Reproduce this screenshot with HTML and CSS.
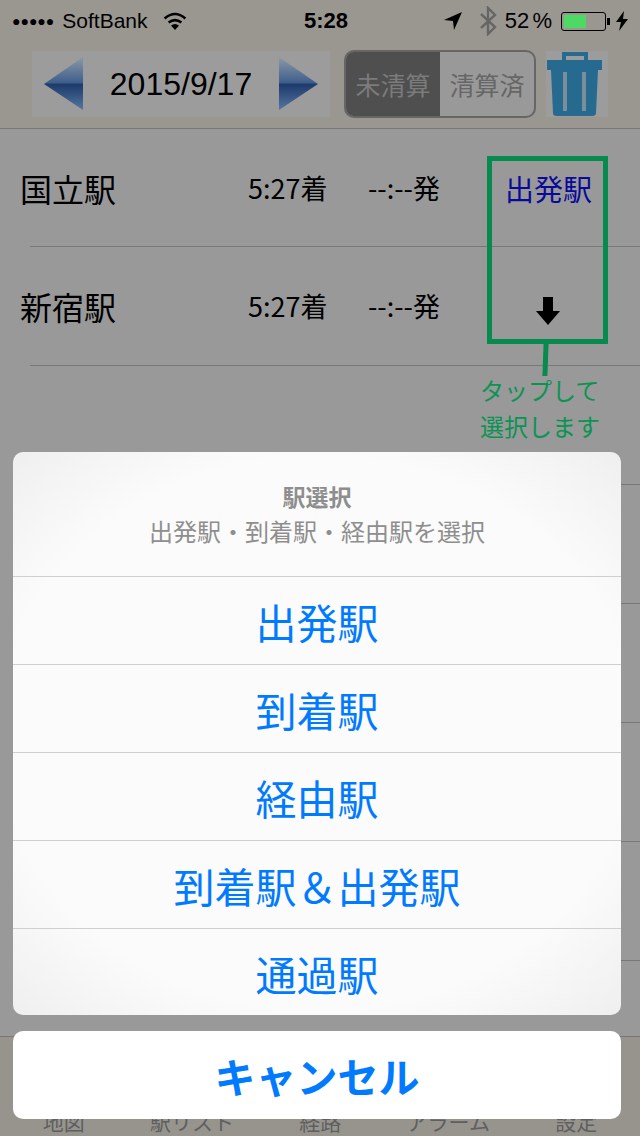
FILE: index.html
```html
<!DOCTYPE html>
<html lang="ja">
<head>
    <meta charset="UTF-8">
    <meta name="viewport" content="width=device-width, initial-scale=1.0">
    <title>駅選択</title>
    <link rel="stylesheet" href="styles.css">
</head>
<body>
    <div class="phone">
        <header class="top">
            <div class="status">
                <div class="status-left">
                    <span class="dots">●●●●●</span>
                    <span>SoftBank</span>
                    <svg class="wifi" width="26" height="20" viewBox="0 0 26 20">
                        <path d="M13 19 L9 14.5 Q13 11.5 17 14.5 Z" fill="#000"/>
                        <path d="M6.6 11.6 Q13 6.6 19.4 11.6" fill="none" stroke="#000" stroke-width="2.6"/>
                        <path d="M2.6 7.4 Q13 -1.4 23.4 7.4" fill="none" stroke="#000" stroke-width="2.6"/>
                    </svg>
                </div>
                <div class="status-time">5:28</div>
                <div class="status-right">
                    <svg width="18" height="18" viewBox="0 0 18 18"><path d="M18 0 L0 8 L9 9 L10 18 Z" fill="#000"/></svg>
                    <svg class="bt" width="18" height="30" viewBox="0 0 18 30"><path d="M2 8 L16 21 L9 28 L9 2 L16 9 L2 22" fill="none" stroke="#666" stroke-width="2.4"/></svg>
                    <span class="percent">52 %</span>
                    <div class="battery"><div class="battery-level"></div></div>
                    <div class="battery-tip"></div>
                    <svg width="12" height="20" viewBox="0 0 12 20"><path d="M8 0 L0 11 L5 11 L3 20 L12 8 L7 8 Z" fill="#000"/></svg>
                </div>
            </div>
            <div class="toolbar">
                <div class="date-box">
                    <svg width="40" height="54" viewBox="0 0 40 54">
                        <defs>
                            <linearGradient id="arrowFill" x1="0" y1="0" x2="0" y2="1">
                                <stop offset="0" stop-color="#8c99a6"/>
                                <stop offset="0.48" stop-color="#3f5f8c"/>
                                <stop offset="0.52" stop-color="#1d3a6c"/>
                                <stop offset="1" stop-color="#56769f"/>
                            </linearGradient>
                        </defs>
                        <path d="M39 0 L0 27 L39 53 Z" fill="url(#arrowFill)"/>
                    </svg>
                    <span class="date">2015/9/17</span>
                    <svg width="40" height="54" viewBox="0 0 40 54">
                        <path d="M1 0 L40 27 L1 53 Z" fill="url(#arrowFill)"/>
                    </svg>
                </div>
                <div class="segment">
                    <span class="seg seg-on">未清算</span>
                    <span class="seg">清算済</span>
                </div>
                <div class="trash-box">
                    <svg width="56" height="66" viewBox="0 0 56 66">
                        <path d="M18 10 V3 H40 V10" fill="none" stroke="#266b8f" stroke-width="4"/>
                        <rect x="1" y="9" width="55" height="10" fill="#266b8f"/>
                        <path d="M5 19 H52 L50 62 Q50 65 46 65 H11 Q7 65 7 62 Z" fill="#266b8f"/>
                        <rect x="17" y="21" width="4" height="39" fill="#7b8f9b"/>
                        <rect x="36" y="21" width="4" height="39" fill="#7b8f9b"/>
                    </svg>
                </div>
            </div>
        </header>

        <main class="list">
            <div class="row">
                <span class="station">国立駅</span>
                <span class="arrive">5:27着</span>
                <span class="depart">--:--発</span>
                <span class="kind kind-blue">出発駅</span>
            </div>
            <div class="row">
                <span class="station">新宿駅</span>
                <span class="arrive">5:27着</span>
                <span class="depart">--:--発</span>
                <span class="kind kind-arrow">
                    <svg width="24" height="28" viewBox="0 0 24 28"><path d="M7 0 H17 V14 H24 L12 28 L0 14 H7 Z" fill="#000"/></svg>
                </span>
            </div>
            <div class="row"></div>
            <div class="row"></div>
            <div class="row"></div>
            <div class="row"></div>
            <div class="row"></div>
        </main>

        <footer class="tabs">
            <span>地図</span>
            <span>駅リスト</span>
            <span>経路</span>
            <span>アラーム</span>
            <span>設定</span>
        </footer>

        <!-- 説明の枠 -->
        <div class="hint-box"></div>
        <div class="hint-line"></div>
        <div class="hint-text">タップして<br>選択します</div>

        <div class="sheet-wrap">
            <div class="sheet">
                <div class="sheet-head">
                    <div class="sheet-title">駅選択</div>
                    <div class="sheet-sub">出発駅・到着駅・経由駅を選択</div>
                </div>
                <div class="sheet-item">出発駅</div>
                <div class="sheet-item">到着駅</div>
                <div class="sheet-item">経由駅</div>
                <div class="sheet-item">到着駅＆出発駅</div>
                <div class="sheet-item">通過駅</div>
            </div>
            <div class="cancel">キャンセル</div>
        </div>
    </div>
</body>
</html>
```

FILE: styles.css
```css
* {
    box-sizing: border-box;
}

body {
    margin: 0;
    padding: 0;
    font-family: "Liberation Sans", "Noto Sans CJK JP", sans-serif;
    background-color: #999;
}

.phone {
    position: relative;
    width: 640px;
    height: 1136px;
    overflow: hidden;
    display: flex;
    flex-direction: column;
    background-color: #999;
    color: #000;
}

.top {
    height: 129px;
    background-color: #9a9791;
    border-bottom: 1px solid #777;
}

.status {
    height: 42px;
    padding: 0 12px;
    display: flex;
    align-items: center;
    justify-content: space-between;
    font-size: 21px;
}

.status-left,
.status-right {
    width: 224px;
    display: flex;
    align-items: center;
    gap: 8px;
}

.status-right {
    width: 212px;
    gap: 0;
    justify-content: flex-end;
}

.status-right .bt {
    margin: 0 8px 0 17px;
}

.dots {
    font-size: 14px;
    letter-spacing: 0;
}

.wifi {
    margin-left: 6px;
}

.status-time {
    font-size: 22px;
    font-weight: bold;
}

.percent {
    margin-right: 9px;
    font-size: 22px;
    word-spacing: -3px;
}

.battery {
    width: 45px;
    height: 19px;
    padding: 2px;
    border: 1px solid #000;
    border-radius: 3px;
}

.battery-level {
    width: 22px;
    height: 100%;
    background-color: #4cd964;
}

.battery-tip {
    width: 3px;
    height: 7px;
    margin: 0 6px 0 1px;
    background-color: #000;
}

.toolbar {
    height: 68px;
    margin-top: 8px;
    padding-left: 32px;
    display: flex;
    align-items: center;
}

.date-box {
    width: 298px;
    height: 66px;
    padding: 0 12px;
    background-color: #9c9c9c;
    display: flex;
    align-items: center;
    justify-content: space-between;
}

.date {
    font-size: 32px;
}

.segment {
    width: 192px;
    height: 68px;
    margin-left: 14px;
    display: flex;
    border: 2px solid #666;
    border-radius: 10px;
    overflow: hidden;
    background-color: #999;
    font-family: "Noto Sans CJK JP", sans-serif;
    font-size: 25px;
    color: #666;
}

.seg {
    width: 95px;
    display: flex;
    align-items: center;
    justify-content: center;
}

.seg-on {
    background-color: #4f4f4f;
    color: #7b7b7b;
}

.trash-box {
    width: 62px;
    height: 66px;
    margin-left: 10px;
    background-color: #9c9c9c;
}

.list {
    flex: 1;
}

.row {
    position: relative;
    height: 120px;
    margin-left: 30px;
    border-bottom: 1px solid #777;
    margin-top: -1px;
    padding-top: 1px;
    font-family: "Noto Sans CJK JP", sans-serif;
}

.row:first-child {
    margin-top: 0;
    height: 118px;
}

.row span {
    position: absolute;
    top: 40px;
    line-height: 40px;
    white-space: nowrap;
}

.row:first-child span {
    top: 39px;
}

.station {
    left: -10px;
    font-size: 32px;
}

.arrive,
.depart {
    font-size: 27px;
}

.arrive {
    left: 218px;
}

.depart {
    left: 338px;
}

.kind {
    left: 475px;
    font-size: 29px;
}

.row .kind-arrow {
    left: 506px;
    top: 51px;
    line-height: 0;
}

.kind-blue {
    color: #0a0a9a;
}

.tabs {
    height: 100px;
    background-color: #97948e;
    border-top: 1px solid #777;
    display: flex;
    justify-content: space-around;
    align-items: flex-end;
    padding: 0 10px 0;
    font-family: "Noto Sans CJK JP", sans-serif;
    font-size: 21px;
    line-height: 30px;
    color: #5f5f5f;
}

.hint-box {
    position: absolute;
    left: 487px;
    top: 156px;
    width: 121px;
    height: 188px;
    border: 5px solid #068a4d;
}

.hint-line {
    position: absolute;
    left: 543px;
    top: 343px;
    width: 5px;
    height: 33px;
    background-color: #068a4d;
    transform: rotate(2deg);
}

.hint-text {
    position: absolute;
    left: 480px;
    top: 372px;
    font-family: "Noto Sans CJK JP", sans-serif;
    font-size: 24px;
    line-height: 36px;
    color: #0a9454;
}

.sheet-wrap {
    position: absolute;
    left: 13px;
    top: 452px;
    width: 608px;
}

.sheet {
    height: 563px;
    border-radius: 10px;
    overflow: hidden;
    background: radial-gradient(ellipse 75% 70% at center, #fbfbfb 70%, #eeeeee 100%);
    font-family: "Noto Sans CJK JP", sans-serif;
}

.sheet-head {
    height: 124px;
    padding-top: 27px;
    text-align: center;
    color: #8e8e8e;
}

.sheet-title {
    font-size: 23px;
    font-weight: bold;
    line-height: 34px;
}

.sheet-sub {
    font-size: 24px;
    line-height: 36px;
}

.sheet-item {
    height: 88px;
    border-top: 1px solid #cfcfcf;
    display: flex;
    align-items: center;
    justify-content: center;
    font-size: 41px;
    color: #007aff;
}

.cancel {
    height: 88px;
    margin-top: 16px;
    border-radius: 10px;
    background-color: #fff;
    display: flex;
    align-items: center;
    justify-content: center;
    font-family: "Noto Sans CJK JP", sans-serif;
    font-size: 41px;
    font-weight: bold;
    color: #007aff;
}
```
